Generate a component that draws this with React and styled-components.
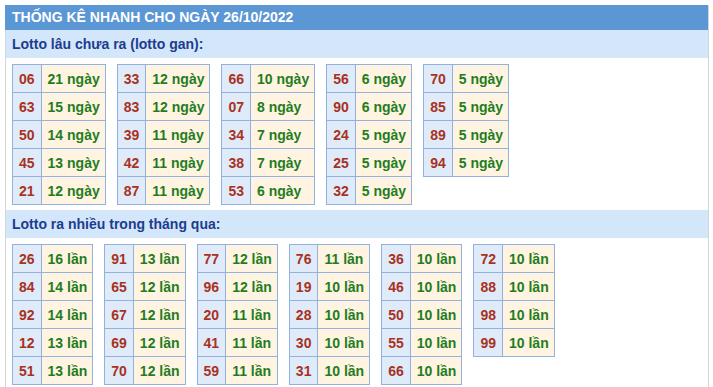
import styled, { createGlobalStyle } from 'styled-components';

const GlobalStyle = createGlobalStyle`
	body {
		margin: 0;
		background: #ffffff;
		font-family: 'Liberation Sans', Arial, sans-serif;
	}
	#root {
		padding: 5px 4px 0 5px;
	}
`;

const gan = [
	[['06', 21], ['63', 15], ['50', 14], ['45', 13], ['21', 12]],
	[['33', 12], ['83', 12], ['39', 11], ['42', 11], ['87', 11]],
	[['66', 10], ['07', 8], ['34', 7], ['38', 7], ['53', 6]],
	[['56', 6], ['90', 6], ['24', 5], ['25', 5], ['32', 5]],
	[['70', 5], ['85', 5], ['89', 5], ['94', 5]],
];

const nhieu = [
	[['26', 16], ['84', 14], ['92', 14], ['12', 13], ['51', 13]],
	[['91', 13], ['65', 12], ['67', 12], ['69', 12], ['70', 12]],
	[['77', 12], ['96', 12], ['20', 11], ['41', 11], ['59', 11]],
	[['76', 11], ['19', 10], ['28', 10], ['30', 10], ['31', 10]],
	[['36', 10], ['46', 10], ['50', 10], ['55', 10], ['66', 10]],
	[['72', 10], ['88', 10], ['98', 10], ['99', 10]],
];

const StatTable = ({ rows, unit }) => (
	<Table>
		<tbody>
			{rows.map(([num, count]) => (
				<tr key={num}>
					<NumCell>{num}</NumCell>
					<ValueCell>
						{count} {unit}
					</ValueCell>
				</tr>
			))}
		</tbody>
	</Table>
);

const App = () => {
	return (
		<>
			<GlobalStyle />
			<Box>
				<Header>THỐNG KÊ NHANH CHO NGÀY 26/10/2022</Header>
				<SubHeader>Lotto lâu chưa ra (lotto gan):</SubHeader>
				<TableRow>
					{gan.map((rows, i) => (
						<StatTable key={i} rows={rows} unit="ngày" />
					))}
				</TableRow>
				<SubHeader>Lotto ra nhiều trong tháng qua:</SubHeader>
				<TableRow>
					{nhieu.map((rows, i) => (
						<StatTable key={i} rows={rows} unit="lần" />
					))}
				</TableRow>
			</Box>
		</>
	);
};

const Box = styled.div`
	border-left: 1px solid #cfd6de;
	border-right: 1px solid #cfd6de;
	min-height: 382px;
	box-sizing: border-box;
`;

const Header = styled.div`
	height: 25px;
	line-height: 25px;
	margin-left: -1px;
	padding-left: 7px;
	background: #5b96d5;
	color: #ffffff;
	font-size: 14px;
	font-weight: bold;
`;

const SubHeader = styled.div`
	height: 28px;
	line-height: 28px;
	padding-left: 6px;
	background: #d4e6fa;
	color: #1b3d8f;
	font-size: 14px;
	font-weight: bold;
`;

const TableRow = styled.div`
	display: flex;
	align-items: flex-start;
	gap: 11px;
	padding: 6px 6px 5px;
`;

const Table = styled.table`
	border-collapse: collapse;
	font-size: 14px;
	font-weight: bold;

	td {
		height: 27px;
		border: 1px solid #93b1de;
		white-space: nowrap;
	}
`;

const NumCell = styled.td`
	padding: 0 6px;
	background: #e0ebfa;
	color: #a8321e;
	text-align: center;
`;

const ValueCell = styled.td`
	padding: 0 5px 0 6px;
	background: #fff4e1;
	color: #1f7d1f;
`;

export default App;
